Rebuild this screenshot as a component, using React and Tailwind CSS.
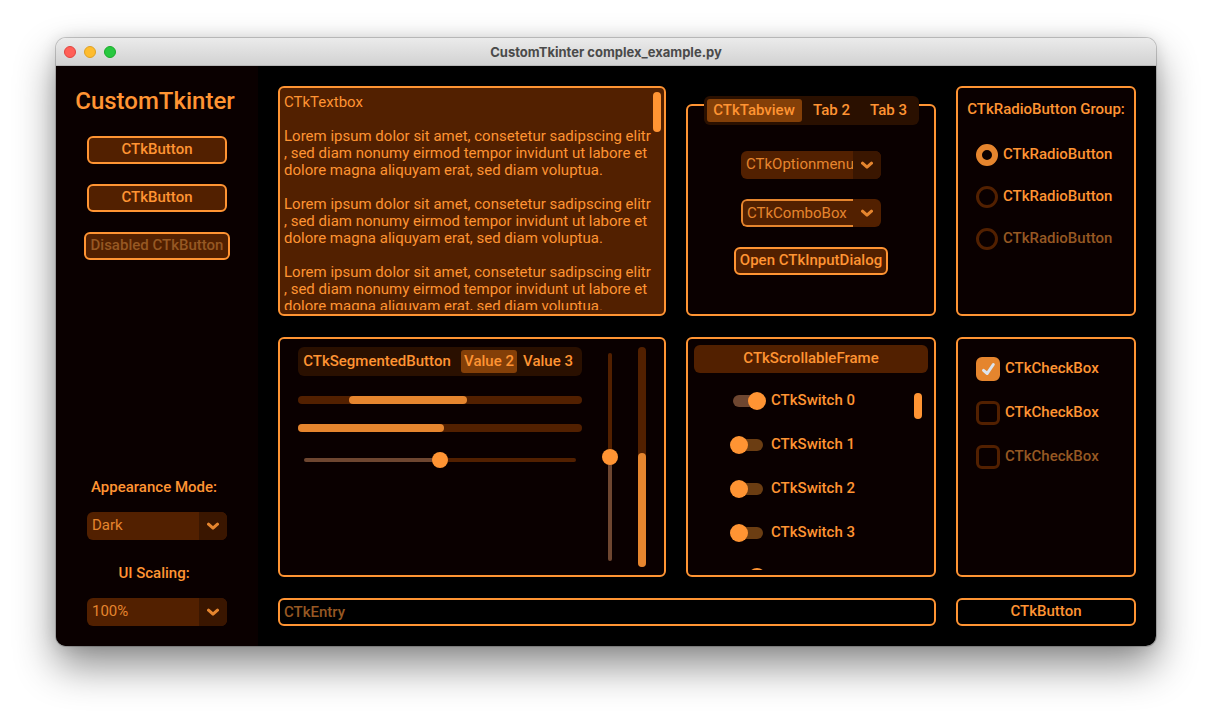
import { useId, useState } from "react";

const LOREM =
  "Lorem ipsum dolor sit amet, consetetur sadipscing elitr\n, sed diam nonumy eirmod tempor invidunt ut labore et\ndolore magna aliquyam erat, sed diam voluptua.\n\n";

const FRAME = "min-h-0 min-w-0 rounded-md border-2 border-[#ff9433] bg-[#0a0000]";

function Chevron() {
  return (
    <svg viewBox="0 0 12 8" className="h-2 w-3" fill="none" stroke="#e5852e" strokeWidth="3" strokeLinecap="round" strokeLinejoin="round" aria-hidden="true">
      <path d="M1.500 2.200 6 6.200 10.500 2.200" />
    </svg>
  );
}

function Button({ children, className = "", disabled = false }) {
  return (
    <button
      type="button"
      disabled={disabled}
      className={`flex h-7 items-center justify-center rounded-md border-2 border-[#ff9433] pb-0.5 whitespace-nowrap disabled:text-[#965823] ${className}`}
    >
      {children}
    </button>
  );
}

function OptionMenu({ id, label, options }) {
  return (
    <div className="relative h-7 w-[140px] overflow-hidden rounded-md bg-[#522000]">
      <select id={id} aria-label={label} className="block h-7 w-full appearance-none pr-7 pb-0.5 pl-[5px] font-normal text-[#e5852e] outline-none">
        {options.map((o) => (
          <option key={o}>{o}</option>
        ))}
      </select>
      <span className="pointer-events-none absolute inset-y-0 right-0 flex w-7 items-center justify-center bg-[#3a1600]">
        <Chevron />
      </span>
    </div>
  );
}

function Sidebar() {
  const modeId = useId();
  const scaleId = useId();
  return (
    <aside className="flex w-[202px] shrink-0 flex-col items-center bg-[#0a0000] py-5">
      <h1 className="mb-5 pr-1 text-2xl leading-[30px]">CustomTkinter</h1>
      <div className="flex flex-col items-center gap-5">
        <Button className="w-[140px] bg-[#522000]">CTkButton</Button>
        <Button className="w-[140px] bg-[#522000]">CTkButton</Button>
        <Button disabled className="w-[146px] bg-[#522000]">
          Disabled CTkButton
        </Button>
      </div>
      <div className="mt-auto flex flex-col items-center">
        <label htmlFor={modeId} className="mb-3 pr-1.5 leading-[26px]">
          Appearance Mode:
        </label>
        <OptionMenu id={modeId} options={["Dark", "Light", "System"]} />
        <label htmlFor={scaleId} className="mt-5 mb-3 pr-1.5 leading-[26px]">
          UI Scaling:
        </label>
        <OptionMenu id={scaleId} options={["100%", "80%", "90%", "110%", "120%"]} />
      </div>
    </aside>
  );
}

function TextPanel() {
  return (
    <div className="flex min-h-0 min-w-0 rounded-md border-2 border-[#ff9433] bg-[#522000] pt-1 pr-[3px] pb-1 pl-1">
      <textarea
        aria-label="CTkTextbox"
        readOnly
        value={"CTkTextbox\n\n" + LOREM.repeat(20)}
        className="min-w-0 flex-1 resize-none overflow-y-auto pt-0.5 leading-[17px] font-normal whitespace-pre outline-none [scrollbar-width:none]"
      />
      <div className="h-10 w-2 rounded-full bg-[#ff9433]" />
    </div>
  );
}

function Segmented({ items, label, tabs = false, className = "" }) {
  const [active, setActive] = useState(items.find((i) => i.initial).text);
  return (
    <div role={tabs ? "tablist" : "group"} aria-label={label} className={`flex h-[29px] shrink-0 rounded-md bg-[#2a1000] p-[3px] ${className}`}>
      {items.map(({ text, width }) => (
        <button
          key={text}
          type="button"
          role={tabs ? "tab" : undefined}
          aria-selected={tabs ? active === text : undefined}
          aria-pressed={tabs ? undefined : active === text}
          onClick={() => setActive(text)}
          className={`flex items-center justify-center rounded-[3px] pb-px whitespace-nowrap ${width} ${active === text ? "bg-[#833f08]" : ""}`}
        >
          {text}
        </button>
      ))}
    </div>
  );
}

function TabPanel() {
  return (
    <div className="flex min-h-0 flex-col pt-2.5">
      <Segmented
        tabs
        label="Tabs"
        className="z-10 -mb-[21px] self-center"
        items={[
          { text: "CTkTabview", width: "w-[95px]", initial: true },
          { text: "Tab 2", width: "w-[60px]" },
          { text: "Tab 3", width: "w-[54px]" },
        ]}
      />
      <div role="tabpanel" aria-label="CTkTabview" className="flex min-h-0 flex-1 flex-col items-center gap-5 rounded-md border-2 border-[#ff9433] bg-[#0a0000] pt-[45px]">
        <OptionMenu label="CTkOptionmenu" options={["CTkOptionmenu", "Value 1", "Value 2"]} />
        <div className="flex h-7 w-[140px] overflow-hidden rounded-md bg-[#522000]">
          <input
            aria-label="CTkComboBox"
            defaultValue="CTkComboBox"
            className="min-w-0 flex-1 rounded-l-md border-2 border-r-0 border-[#e5852e] pl-1 font-normal text-[#e5852e] outline-none"
          />
          <button type="button" aria-label="Show values" className="flex w-7 items-center justify-center">
            <Chevron />
          </button>
        </div>
        <Button className="w-[154px] bg-[#522000]">Open CTkInputDialog</Button>
      </div>
    </div>
  );
}

function RadioPanel() {
  return (
    <fieldset className={`${FRAME} px-[18px]`}>
      <legend className="float-left -mx-2.5 mt-1.5 mb-5 w-[calc(100%+20px)] text-center leading-[30px]">CTkRadioButton Group:</legend>
      <div className="clear-both flex flex-col gap-5">
        {[0, 1, 2].map((i) => (
          <label key={i} className="flex h-[22px] items-center gap-[5px]">
            <input
              type="radio"
              name="radio-group"
              defaultChecked={i === 0}
              disabled={i === 2}
              className="peer size-[22px] shrink-0 appearance-none rounded-full border-3 border-[#522000] checked:border-6 checked:border-[#e5852e]"
            />
            <span className="pb-0.5 peer-disabled:text-[#965823]">CTkRadioButton</span>
          </label>
        ))}
      </div>
    </fieldset>
  );
}

function SliderPanel() {
  return (
    <div className={`${FRAME} flex gap-5 px-[18px] py-2`}>
      <div className="flex min-w-0 flex-1 flex-col">
        <Segmented
          label="Values"
          items={[
            { text: "CTkSegmentedButton", width: "flex-1 pr-2" },
            { text: "Value 2", width: "w-14", initial: true },
            { text: "Value 3", width: "w-[62px]" },
          ]}
        />
        <div role="progressbar" aria-label="Indeterminate progress" className="mt-5 h-2 rounded-full bg-[#522000]">
          <div className="ml-[18%] h-2 w-[41.500%] rounded-full bg-[#e5852e]" />
        </div>
        <div role="progressbar" aria-label="Progress" aria-valuenow={51} className="mt-5 h-2 rounded-full bg-[#522000]">
          <div className="h-2 w-[51.400%] rounded-full bg-[#e5852e]" />
        </div>
        <input
          type="range"
          aria-label="Horizontal slider"
          defaultValue={50}
          className="mx-1.5 mt-5 h-4 appearance-none bg-transparent outline-none [&::-webkit-slider-runnable-track]:h-1 [&::-webkit-slider-runnable-track]:rounded-full [&::-webkit-slider-runnable-track]:bg-[linear-gradient(to_right,#6e4630_50%,#522000_50%)] [&::-webkit-slider-thumb]:-mt-1.5 [&::-webkit-slider-thumb]:size-4 [&::-webkit-slider-thumb]:appearance-none [&::-webkit-slider-thumb]:rounded-full [&::-webkit-slider-thumb]:bg-[#ff9433]"
        />
      </div>
      <input
        type="range"
        aria-label="Vertical slider"
        defaultValue={50}
        className="mt-1.5 mb-1.5 h-auto w-4 appearance-none bg-transparent outline-none [direction:rtl] [writing-mode:vertical-lr] [&::-webkit-slider-runnable-track]:w-1 [&::-webkit-slider-runnable-track]:rounded-full [&::-webkit-slider-runnable-track]:bg-[linear-gradient(to_top,#6e4630_50%,#522000_50%)] [&::-webkit-slider-thumb]:-ml-1.5 [&::-webkit-slider-thumb]:size-4 [&::-webkit-slider-thumb]:appearance-none [&::-webkit-slider-thumb]:rounded-full [&::-webkit-slider-thumb]:bg-[#ff9433]"
      />
      <div role="progressbar" aria-label="Vertical progress" aria-valuenow={52} className="flex w-2 flex-col justify-end rounded-full bg-[#522000]">
        <div className="h-[52%] rounded-full bg-[#e5852e]" />
      </div>
    </div>
  );
}

function Switch({ text, on }) {
  return (
    <label className="flex h-6 shrink-0 items-center gap-[5px]">
      <span className="grid h-[18px] w-9 shrink-0 items-center">
        <input
          type="checkbox"
          role="switch"
          defaultChecked={on}
          className="peer col-start-1 row-start-1 mx-[3px] h-3 appearance-none rounded-full bg-[#6b3d12] checked:bg-[#6e4630]"
        />
        <span className="pointer-events-none col-start-1 row-start-1 size-[18px] rounded-full bg-[#ff9433] peer-checked:justify-self-end" />
      </span>
      <span className="min-w-[87px] pb-0.5 whitespace-nowrap">{text}</span>
    </label>
  );
}

function ScrollPanel() {
  return (
    <div className={`${FRAME} flex flex-col px-1.5 pt-1.5 pb-[5px]`}>
      <h2 className="flex h-7 shrink-0 items-center justify-center rounded-md bg-[#522000] pb-0.5">CTkScrollableFrame</h2>
      <div className="mt-4 flex min-h-0 flex-1 pr-1.5">
        <div className="flex min-w-0 flex-1 flex-col items-center gap-5 overflow-y-auto [scrollbar-width:none]">
          {[0, 1, 2, 3, 4].map((i) => (
            <Switch key={i} text={`CTkSwitch ${i}`} on={i === 0 || i === 4} />
          ))}
        </div>
        <div className="mt-1 ml-5 h-[26px] w-2 rounded-full bg-[#ff9433]" />
      </div>
    </div>
  );
}

function CheckPanel() {
  return (
    <div className={`${FRAME} flex flex-col gap-5 p-[18px]`}>
      {[0, 1, 2].map((i) => (
        <label key={i} className="flex h-6 items-center gap-[5px]">
          <span className="grid size-6 shrink-0 place-items-center">
            <input
              type="checkbox"
              defaultChecked={i === 0}
              disabled={i === 2}
              className="peer col-start-1 row-start-1 size-6 appearance-none rounded-md border-3 border-[#522000] checked:border-[#e5852e] checked:bg-[#e5852e]"
            />
            <svg
              viewBox="0 0 24 24"
              className="pointer-events-none invisible col-start-1 row-start-1 size-6 peer-checked:visible"
              fill="none"
              stroke="#dce4ee"
              strokeWidth="3"
              strokeLinecap="round"
              strokeLinejoin="round"
              aria-hidden="true"
            >
              <path d="M7.500 13.400 11.200 16.500 17.300 7.500" />
            </svg>
          </span>
          <span className={`pb-0.5 ${i === 2 ? "text-[#965823]" : ""}`}>CTkCheckBox</span>
        </label>
      ))}
    </div>
  );
}

export default function App() {
  return (
    <div className="flex h-screen flex-col bg-white px-14 pt-[38px] pb-[74px] font-['Roboto','Liberation_Sans',sans-serif] text-[15px] leading-[18px] font-medium text-[#ff9433]">
      <div className="flex min-h-0 flex-1 flex-col overflow-hidden rounded-[10px] shadow-[0_0_0_1px_rgba(0,0,0,0.18),0_0_16px_rgba(0,0,0,0.12),0_20px_40px_rgba(0,0,0,0.45)]">
        <header className="grid h-7 shrink-0 grid-cols-[1fr_auto_1fr] items-center border-b border-[#b8b8b8] bg-linear-to-b from-[#ebebeb] to-[#d2d2d2] px-2">
          <div className="flex gap-2">
            <button type="button" aria-label="Close" className="size-3 rounded-full border border-[#e0443e] bg-[#ff5f57]" />
            <button type="button" aria-label="Minimize" className="size-3 rounded-full border border-[#dea123] bg-[#febc2e]" />
            <button type="button" aria-label="Zoom" className="size-3 rounded-full border border-[#1aab29] bg-[#28c840]" />
          </div>
          <p className="font-['Inter',sans-serif] text-[13px] font-bold text-[#4a4a4a]">CustomTkinter complex_example.py</p>
        </header>
        <div className="flex min-h-0 flex-1 bg-black">
          <Sidebar />
          <main className="grid min-w-0 flex-1 grid-cols-[minmax(0,1fr)_250px_180px] grid-rows-[minmax(0,230fr)_minmax(0,240fr)_28px] gap-x-5 gap-y-[21px] p-5">
            <TextPanel />
            <TabPanel />
            <RadioPanel />
            <SliderPanel />
            <ScrollPanel />
            <CheckPanel />
            <input
              aria-label="CTkEntry"
              placeholder="CTkEntry"
              className="col-span-2 h-7 min-w-0 rounded-md border-2 border-[#ff9433] px-1 outline-none placeholder:text-[#965823]"
            />
            <Button>CTkButton</Button>
          </main>
        </div>
      </div>
    </div>
  );
}
